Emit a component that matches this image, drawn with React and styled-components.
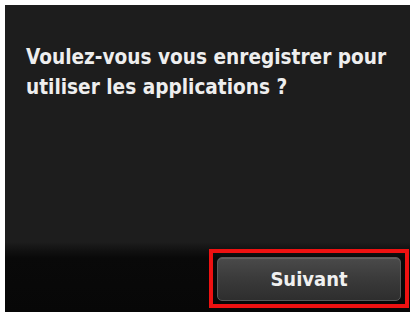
import React from "react";
import styled, { createGlobalStyle } from "styled-components";

const GlobalStyle = createGlobalStyle`
  html, body {
    margin: 0;
    padding: 0;
    background: #ffffff;
  }
  body {
    font-family: "DejaVu Sans Condensed", "Liberation Sans Narrow", "Roboto", sans-serif;
  }
`;

const Page = styled.div`
  width: 414px;
  height: 312px;
  padding: 5px 4px 0 5px;
  box-sizing: border-box;
`;

const Screen = styled.div`
  height: 307px;
  display: flex;
  flex-direction: column;
  background: #1d1d1d;
`;

const Message = styled.div`
  flex: 1;
  padding: 37px 10px 0 21px;
  color: #eeeeee;
  font-size: 20.6px;
  font-weight: bold;
  line-height: 30px;
`;

const BottomBar = styled.div`
  height: 70px;
  display: flex;
  justify-content: flex-end;
  align-items: flex-start;
  padding: 7px 1px 0 0;
  box-sizing: border-box;
  background: linear-gradient(
    to bottom,
    #1d1d1d 0px,
    #121212 8px,
    #090909 16px,
    #070707 100%
  );
`;

const Highlight = styled.div`
  border: 4px solid #ee1111;
  padding: 4px 4px 3px 4px;
`;

const Button = styled.button`
  width: 184px;
  height: 44px;
  border-radius: 5px;
  border: 1px solid #5a5a5a;
  background: linear-gradient(to bottom, #4a4a4a 0%, #3a3a3a 50%, #2e2e2e 100%);
  box-shadow: inset 0 1px 0 rgba(255, 255, 255, 0.12);
  color: #f0f0f0;
  font-family: inherit;
  font-size: 20px;
  font-weight: bold;
  padding: 0;
`;

export default function App() {
  return (
    <>
      <GlobalStyle />
      <Page>
        <Screen>
          <Message>
            Voulez-vous vous enregistrer pour
            <br />
            utiliser les applications ?
          </Message>
          <BottomBar>
            <Highlight>
              <Button>Suivant</Button>
            </Highlight>
          </BottomBar>
        </Screen>
      </Page>
    </>
  );
}
